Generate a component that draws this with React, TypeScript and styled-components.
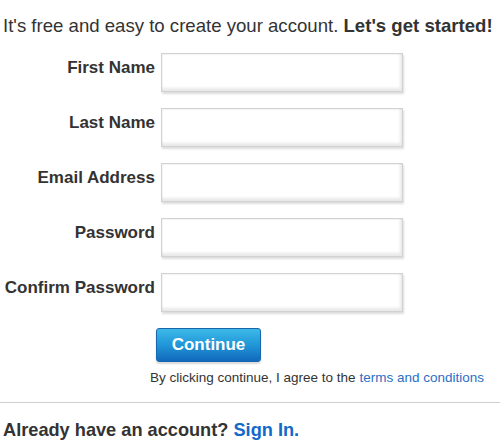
import React from 'react';
import styled, { createGlobalStyle } from 'styled-components';

const GlobalStyle = createGlobalStyle`
  body {
    margin: 0;
    background: #fff;
    font-family: "Liberation Sans", Arial, sans-serif;
    color: #333;
  }
`;

const Page = styled.div`
  width: 500px;
  display: flex;
  flex-direction: column;
`;

const Intro = styled.p`
  margin: 15px 0 0 3px;
  font-size: 18.6px;
  line-height: 22px;
  white-space: nowrap;
`;

const Strong = styled.strong`
  font-weight: 700;
`;

const Form = styled.form`
  display: grid;
  grid-template-columns: 155px 242px;
  column-gap: 6px;
  row-gap: 16px;
  margin-top: 16px;
`;

const Label = styled.label`
  text-align: right;
  font-size: 17px;
  font-weight: 700;
  line-height: 20px;
  padding-top: 4.5px;
  white-space: nowrap;
`;

const Input = styled.input`
  box-sizing: border-box;
  width: 242px;
  height: 39px;
  margin: 0;
  border: 1px solid #d2d2d2;
  background: #fff;
  box-shadow: inset -2px -3px 3px rgba(0, 0, 0, 0.09), inset 1px 1px 1px rgba(0, 0, 0, 0.05),
    1px 2px 2px rgba(0, 0, 0, 0.14);
  font-size: 16px;
  padding: 0 8px;
`;

const Actions = styled.div`
  display: flex;
  flex-direction: column;
  align-items: flex-start;
  padding-left: 150px;
  margin-top: 16px;
`;

const Button = styled.button`
  box-sizing: border-box;
  width: 105px;
  height: 34px;
  margin-left: 6px;
  border: 1px solid #1867ad;
  border-radius: 3px;
  background: linear-gradient(to bottom, #3cb9e8 0%, #2196d8 50%, #1169bd 100%);
  box-shadow: 0 2px 2px rgba(0, 0, 0, 0.15);
  color: #fff;
  font-family: "Liberation Sans", Arial, sans-serif;
  font-size: 17px;
  font-weight: 700;
  cursor: pointer;
`;

const Terms = styled.p`
  margin: 7.5px 0 0;
  font-size: 13.5px;
  line-height: 16px;
  white-space: nowrap;
`;

const Link = styled.a<{ $bold?: boolean }>`
  color: ${p => (p.$bold ? '#1169c9' : '#2b6fc4')};
  font-weight: ${p => (p.$bold ? 700 : 400)};
  text-decoration: none;
`;

const Rule = styled.hr`
  width: 100%;
  margin: 16.5px 0 0;
  border: 0;
  border-top: 1px solid #cfcfcf;
`;

const Footer = styled.p`
  margin: 17px 0 0 3px;
  font-size: 18.2px;
  font-weight: 700;
  line-height: 21px;
  white-space: nowrap;
`;

const fields = [
  { id: 'first', label: 'First Name', type: 'text' },
  { id: 'last', label: 'Last Name', type: 'text' },
  { id: 'email', label: 'Email Address', type: 'email' },
  { id: 'pass', label: 'Password', type: 'password' },
  { id: 'confirm', label: 'Confirm Password', type: 'password' },
];

const App = () => {
  return (
    <Page>
      <GlobalStyle />
      <Intro>
        It's free and easy to create your account. <Strong>Let's get started!</Strong>
      </Intro>
      <Form onSubmit={e => e.preventDefault()}>
        {fields.map(f => (
          <React.Fragment key={f.id}>
            <Label htmlFor={f.id}>{f.label}</Label>
            <Input id={f.id} type={f.type} />
          </React.Fragment>
        ))}
      </Form>
      <Actions>
        <Button type="button">Continue</Button>
        <Terms>
          By clicking continue, I agree to the <Link href="#">terms and conditions</Link>
        </Terms>
      </Actions>
      <Rule />
      <Footer>
        Already have an account? <Link href="#" $bold>Sign In.</Link>
      </Footer>
    </Page>
  );
};

export default App;
